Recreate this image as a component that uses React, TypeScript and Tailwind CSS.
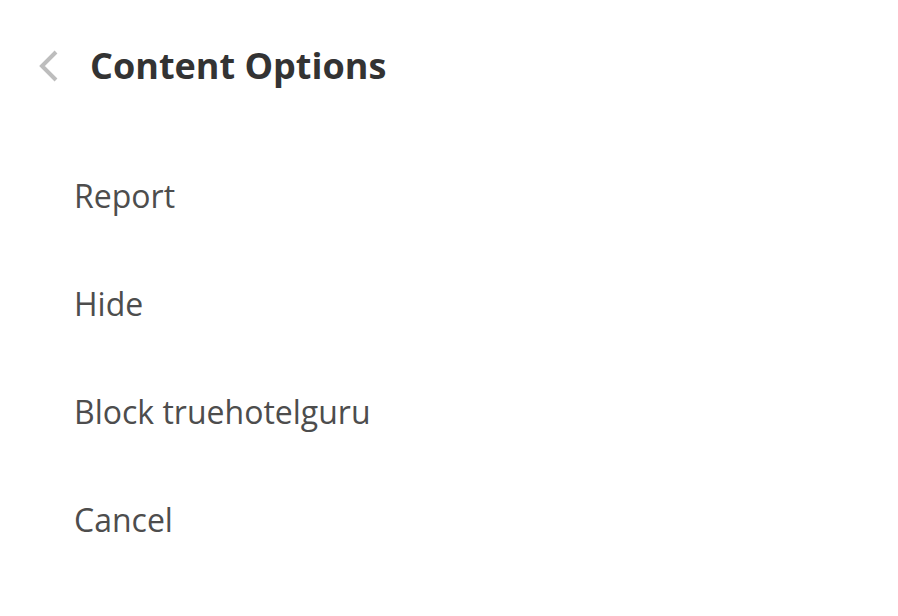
import React from "react";

export default function App() {
  const items = ["Report", "Hide", "Block truehotelguru", "Cancel"];
  return (
    <div className="w-[898px] h-[616px] bg-white" style={{ fontFamily: '"Open Sans", sans-serif' }}>
      <div className="flex items-center h-[132px] pl-[36px]">
        <svg width="26" height="34" viewBox="0 0 26 34" className="shrink-0">
          <path d="M20 3 L6 17 L20 31" fill="none" stroke="#bdbdbd" strokeWidth="4" />
        </svg>
        <div className="ml-[28px] text-[36px] font-bold text-[#333333] leading-none">Content Options</div>
      </div>
      <div className="flex flex-col pl-[74px] pt-[10px]">
        {items.map((t) => (
          <div key={t} className="h-[108px] flex items-center text-[32px] text-[#4d4d4d] leading-none">
            {t}
          </div>
        ))}
      </div>
    </div>
  );
}
